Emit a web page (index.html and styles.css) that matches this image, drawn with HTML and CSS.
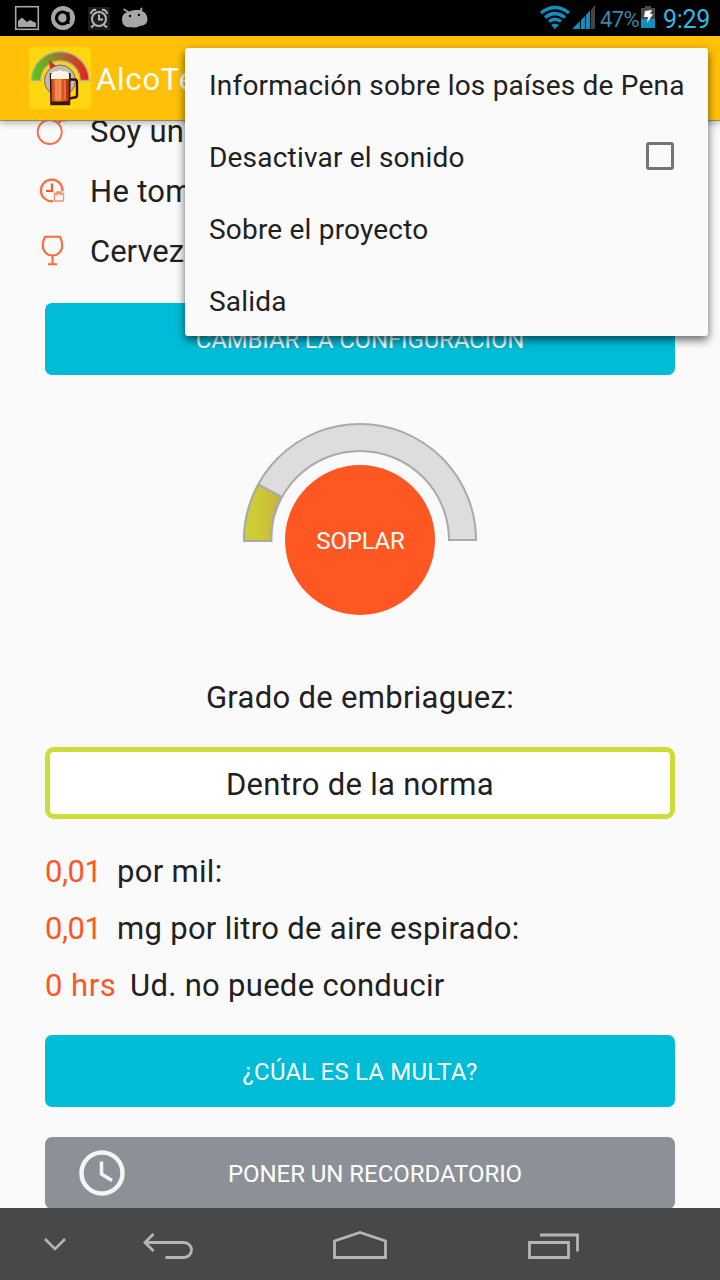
FILE: index.html
```html
<!DOCTYPE html>
<html lang="es">
<head>
    <meta charset="UTF-8">
    <meta name="viewport" content="width=device-width, initial-scale=1.0">
    <title>AlcoTest</title>
    <link rel="stylesheet" href="styles.css">
</head>
<body>
    <div class="screen">
        <div class="status-bar">
            <svg class="notifications" width="150" height="36" viewBox="0 0 150 36">
                <rect x="15.700" y="6.700" width="22.600" height="22.600" fill="none" stroke="#a6a6a6" stroke-width="1.600"/>
                <path d="M18 27v-6l4-3.500 5 4.500 3-2 6 3v4z" fill="#a6a6a6"/>
                <circle cx="63" cy="18" r="12" fill="#a6a6a6"/>
                <circle cx="62.500" cy="18" r="6" fill="none" stroke="#000" stroke-width="3.200"/>
                <path d="M68 12v12" fill="none" stroke="#000" stroke-width="3"/>
                <rect x="88" y="7" width="22" height="23" fill="#1c1c1c"/>
                <g fill="none" stroke="#b5b5b5" stroke-width="2">
                    <circle cx="99" cy="19" r="7"/>
                    <path d="M99 14.500v5h4M91 14a4 4 0 0 1 5-4M107 14a4 4 0 0 0-5-4M94 25l-3 2.500M104 25l3 2.500"/>
                </g>
                <path d="M122 20q0-7 5-7.500l-4-3 1-1 5 3q3-1.500 6-1.500h5l1-2.500 1.500 .5-.5 3q5 2 5.500 8 0 7-8 7-4 2.500-8 1-9 1.500-9.500-7z" fill="#a6a6a6"/>
                <circle cx="130" cy="16" r="1.200" fill="#000"/>
                <circle cx="139" cy="15" r="1.200" fill="#000"/>
            </svg>
            <div class="status-right">
                <svg width="60" height="36" viewBox="540 0 60 36">
                    <g fill="none" stroke="#0d8fc2" stroke-width="3.400">
                        <path d="M541 13Q555 2 569 13"/>
                        <path d="M545 17.500Q555 9.500 565 17.500"/>
                        <path d="M549 21.500Q555 17 561 21.500"/>
                    </g>
                    <path d="M551 25q4-3 8 0l-4 4z" fill="#0d8fc2"/>
                    <path d="M572 29l8-8v8zM581 20l4-4v13h-4zM586 15l4-4.500V29h-4z" fill="#0d8fc2"/>
                    <path d="M591 10l4-5v24h-4z" fill="#444"/>
                </svg>
                <span class="percent">47%</span>
                <svg width="16" height="36" viewBox="640 0 16 36">
                    <path d="M641 8h4V6h6v2h4v11h-14z" fill="#4a4a4a"/>
                    <path d="M641 19h14v9h-14z" fill="#0d8fc2"/>
                    <path d="M645 11l7-1-2 4h3l-6 9 1-6h-4z" fill="#fff"/>
                </svg>
                <span class="clock">9:29</span>
            </div>
        </div>

        <div class="app-bar">
            <svg class="logo" width="62" height="62" viewBox="29 47 62 62">
                <defs>
                    <linearGradient id="dial"><stop offset="0" stop-color="#4fd012"/><stop offset=".5" stop-color="#a0742c"/><stop offset="1" stop-color="#ee1c1c"/></linearGradient>
                    <linearGradient id="beer"><stop offset="0" stop-color="#c93a12"/><stop offset=".4" stop-color="#f08a48"/><stop offset=".65" stop-color="#e4501c"/><stop offset="1" stop-color="#9c2408"/></linearGradient>
                </defs>
                <rect x="29" y="47" width="62" height="62" rx="4" fill="#ffd60f"/>
                <path d="M31.500 80.500a28.800 28.800 0 0 1 57.600 0h-9a19.800 19.800 0 0 0-39.600 0z" fill="url(#dial)" stroke="#b3ae98" stroke-width="1.400"/>
                <circle cx="60" cy="80.500" r="15.500" fill="#bdbdbd" stroke="#776d48" stroke-width="1"/>
                <path d="M49 60l7 6-6 3z" fill="#d42b2b"/>
                <path d="M70 79.500h4.500q2.500 0 2.500 2.500v13q0 2.500-2.500 2.500l-5.500 1" fill="none" stroke="#35110a" stroke-width="2.400"/>
                <path d="M50.500 74h19.500l-.5 30.500h-18.500z" fill="url(#beer)" stroke="#35110a" stroke-width="1.400"/>
                <path d="M56 80v20M60 80v20M65 80v20" stroke="#ffc08a" stroke-width="1" opacity=".7"/>
                <path d="M51.500 101.500h17.500v3h-17.500z" fill="#3a130b"/>
                <path d="M51 79v-4.500q2-4 6-3 3-3 6 0 5-1 6 3v4.500z" fill="#fff5e4"/>
            </svg>
            <span class="app-title">AlcoTest</span>
        </div>

        <div class="content">
            <div class="setting">
                <svg class="setting-icon" width="40" height="60" viewBox="30 101 40 60">
                    <circle cx="49.700" cy="132" r="12" fill="none" stroke="#ff6a40" stroke-width="1.900"/>
                    <path d="M58 123.500l7.500-7.500M59 120.500h7.500" fill="none" stroke="#ff6a40" stroke-width="1.900"/>
                </svg>
                <span>Soy un hombre</span>
            </div>
            <div class="setting">
                <svg class="setting-icon" width="40" height="60" viewBox="30 161 40 60">
                    <path d="M53 201.200a10.800 10.800 0 1 1 9.500-10" fill="none" stroke="#ff6a40" stroke-width="2.200"/>
                    <path d="M52 183.500v7.500h-6" fill="none" stroke="#ff5722" stroke-width="2.200"/>
                    <path d="M54.500 193.500h9v7.500h-9zM57 195.500v-3.500h4v3.500" fill="#fafafa" stroke="#ff8a68" stroke-width="1.300"/>
                </svg>
                <span>He tomado</span>
            </div>
            <div class="setting">
                <svg class="setting-icon" width="40" height="60" viewBox="30 221 40 60">
                    <path d="M45 236.800h15q2.200 4 2.200 9a9.700 9.700 0 0 1-19.400 0q0-5 2.200-9zM52.500 255v9M48 264.200h9" fill="none" stroke="#ff6a40" stroke-width="2.100"/>
                </svg>
                <span class="drink">Cerveza</span>
            </div>

            <button class="btn btn-change">CAMBIAR LA CONFIGURACIÓN</button>

            <div class="gauge">
                <svg class="gauge-arc" width="240" height="124" viewBox="240 420 240 124">
                    <defs>
                        <linearGradient id="level"><stop offset="0" stop-color="#cfce37"/><stop offset=".4" stop-color="#cdca37"/><stop offset="1" stop-color="#cab238"/></linearGradient>
                    </defs>
                    <path d="M244 540a116 116 0 0 1 232 0h-27a89 89 0 0 0-178 0z" fill="#ddd" stroke="#aaa" stroke-width="2"/>
                    <path d="M244 541A116 116 0 0 1 258.500 484.500L281 496.500A89 89 0 0 0 271.500 541z" fill="url(#level)" stroke="#aaa" stroke-width="2"/>
                </svg>
                <button class="blow">SOPLAR</button>
            </div>

            <p class="degree">Grado de embriaguez:</p>
            <div class="result">Dentro de la norma</div>

            <div class="reading"><span class="value">0,01</span><span>por mil:</span></div>
            <div class="reading"><span class="value">0,01</span><span>mg por litro de aire espirado:</span></div>
            <div class="reading"><span class="value value-hrs">0 hrs</span><span>Ud. no puede conducir</span></div>

            <button class="btn btn-fine">¿CÚAL ES LA MULTA?</button>
            <button class="btn btn-reminder">
                <svg width="46" height="46" viewBox="0 0 46 46" fill="none" stroke="#f4f5f5">
                    <circle cx="23" cy="23" r="20.500" stroke-width="4.500"/>
                    <path d="M22.500 11.500v12.500l10.500 6.500" stroke-width="3.500"/>
                </svg>
                <span>PONER UN RECORDATORIO</span>
            </button>
        </div>

        <div class="nav-bar">
            <svg width="720" height="72" viewBox="0 1208 720 72" fill="none" stroke="#b5b5b5" stroke-width="2.800">
                <path d="M45 1239l10 10 10-10" stroke-width="2.600"/>
                <path d="M145 1242.500h39a7.400 7.400 0 0 1 0 15H165.500M153.500 1234l-8.500 8.500 8.500 8.500"/>
                <path d="M334.500 1257.500v-16.500l25.500-8.500 25.500 8.500v16.500z"/>
                <path d="M529.500 1242.500h39v15h-39zM540 1235h37.500v16.500"/>
            </svg>
        </div>

        <div class="menu">
            <div class="menu-item">Información sobre los países de Pena</div>
            <div class="menu-item">Desactivar el sonido<span class="checkbox"></span></div>
            <div class="menu-item">Sobre el proyecto</div>
            <div class="menu-item">Salida</div>
        </div>
    </div>
</body>
</html>
```
FILE: styles.css
```css
* {
    box-sizing: border-box;
}

body {
    margin: 0;
    font-family: Roboto, sans-serif;
    background: #fafafa;
    color: #212121;
}

svg {
    display: block;
    flex: none;
}

.screen {
    position: relative;
    display: flex;
    flex-direction: column;
    width: 720px;
    height: 1280px;
    overflow: hidden;
}

.status-bar {
    display: flex;
    justify-content: space-between;
    flex: none;
    height: 36px;
    background: #000;
}

.status-right {
    display: flex;
    line-height: 39px;
    padding-right: 10px;
}

.percent {
    width: 40px;
    color: #3b87a6;
    font-size: 22px;
    letter-spacing: -0.6px;
}

.clock {
    width: 54px;
    text-align: right;
    white-space: nowrap;
    color: #33b5e5;
    font-size: 25px;
    letter-spacing: -0.3px;
}

.app-bar {
    display: flex;
    align-items: center;
    gap: 5px;
    flex: none;
    height: 85px;
    padding-left: 29px;
    background: #ffc107;
    border-bottom: 1px solid #8f8876;
    box-shadow: 0 2px 7px rgba(0, 0, 0, 0.3);
    z-index: 1;
}

.app-title {
    margin-top: 2px;
    color: #fff;
    font-size: 31px;
    letter-spacing: 0.8px;
}

/* scrolled, the first row slides under the app bar */
.content {
    flex: 1;
    min-height: 0;
    margin-top: -20px;
    padding: 0 45px;
    overflow: hidden;
    font-size: 31px;
    letter-spacing: 0.3px;
}

.setting {
    display: flex;
    gap: 20px;
    height: 60px;
    margin-left: -15px;
    line-height: 62px;
}

.drink {
    letter-spacing: 0;
}

.btn {
    display: flex;
    align-items: center;
    justify-content: center;
    width: 100%;
    height: 72px;
    padding: 2px 0 0;
    border: none;
    border-radius: 7px;
    background: #00bcd7;
    color: #fff;
    font-family: inherit;
    font-size: 24px;
}

.btn-change {
    margin-top: 22px;
    letter-spacing: -0.15px;
}

.gauge {
    display: grid;
    justify-items: center;
    height: 195px;
    margin-top: 45px;
}

.gauge-arc,
.blow {
    grid-area: 1 / 1;
}

.blow {
    align-self: end;
    width: 150px;
    height: 150px;
    padding: 2px 0 0 1px;
    border: none;
    border-radius: 50%;
    background: #ff5722;
    color: #fff;
    font-family: inherit;
    font-size: 24px;
    letter-spacing: -0.2px;
}

.degree {
    margin: 63px 0 29px;
    line-height: 40px;
    text-align: center;
}

.result {
    height: 72px;
    margin-bottom: 24px;
    border: 5px solid #cddc39;
    border-radius: 9px;
    background: #fff;
    line-height: 66px;
    text-align: center;
}

.reading {
    display: flex;
    height: 57px;
    line-height: 57px;
}

.value {
    width: 72px;
    color: #ff5722;
    letter-spacing: -0.5px;
}

.value-hrs {
    width: 85px;
    letter-spacing: 0.5px;
}

.btn-fine {
    margin-top: 21px;
    letter-spacing: 0.2px;
}

.btn-reminder {
    justify-content: flex-start;
    gap: 103px;
    margin-top: 30px;
    padding: 0 0 0 34px;
    background: #8c9097;
}

.btn-reminder span {
    margin-top: 2px;
    letter-spacing: -0.05px;
}

.nav-bar {
    flex: none;
    height: 72px;
    background: #48484a;
}

.menu {
    position: absolute;
    top: 48px;
    left: 185px;
    z-index: 2;
    width: 523px;
    height: 288px;
    background: #fafafa;
    border-radius: 3px;
    box-shadow: 0 4px 10px rgba(0, 0, 0, 0.6);
}

.menu-item {
    display: flex;
    align-items: center;
    justify-content: space-between;
    height: 72px;
    padding: 3px 34px 0 24px;
    font-size: 28px;
    letter-spacing: 0.2px;
    white-space: nowrap;
}

.checkbox {
    width: 28px;
    height: 28px;
    margin-top: -3px;
    border: 3px solid #757575;
    border-radius: 3px;
}
```
